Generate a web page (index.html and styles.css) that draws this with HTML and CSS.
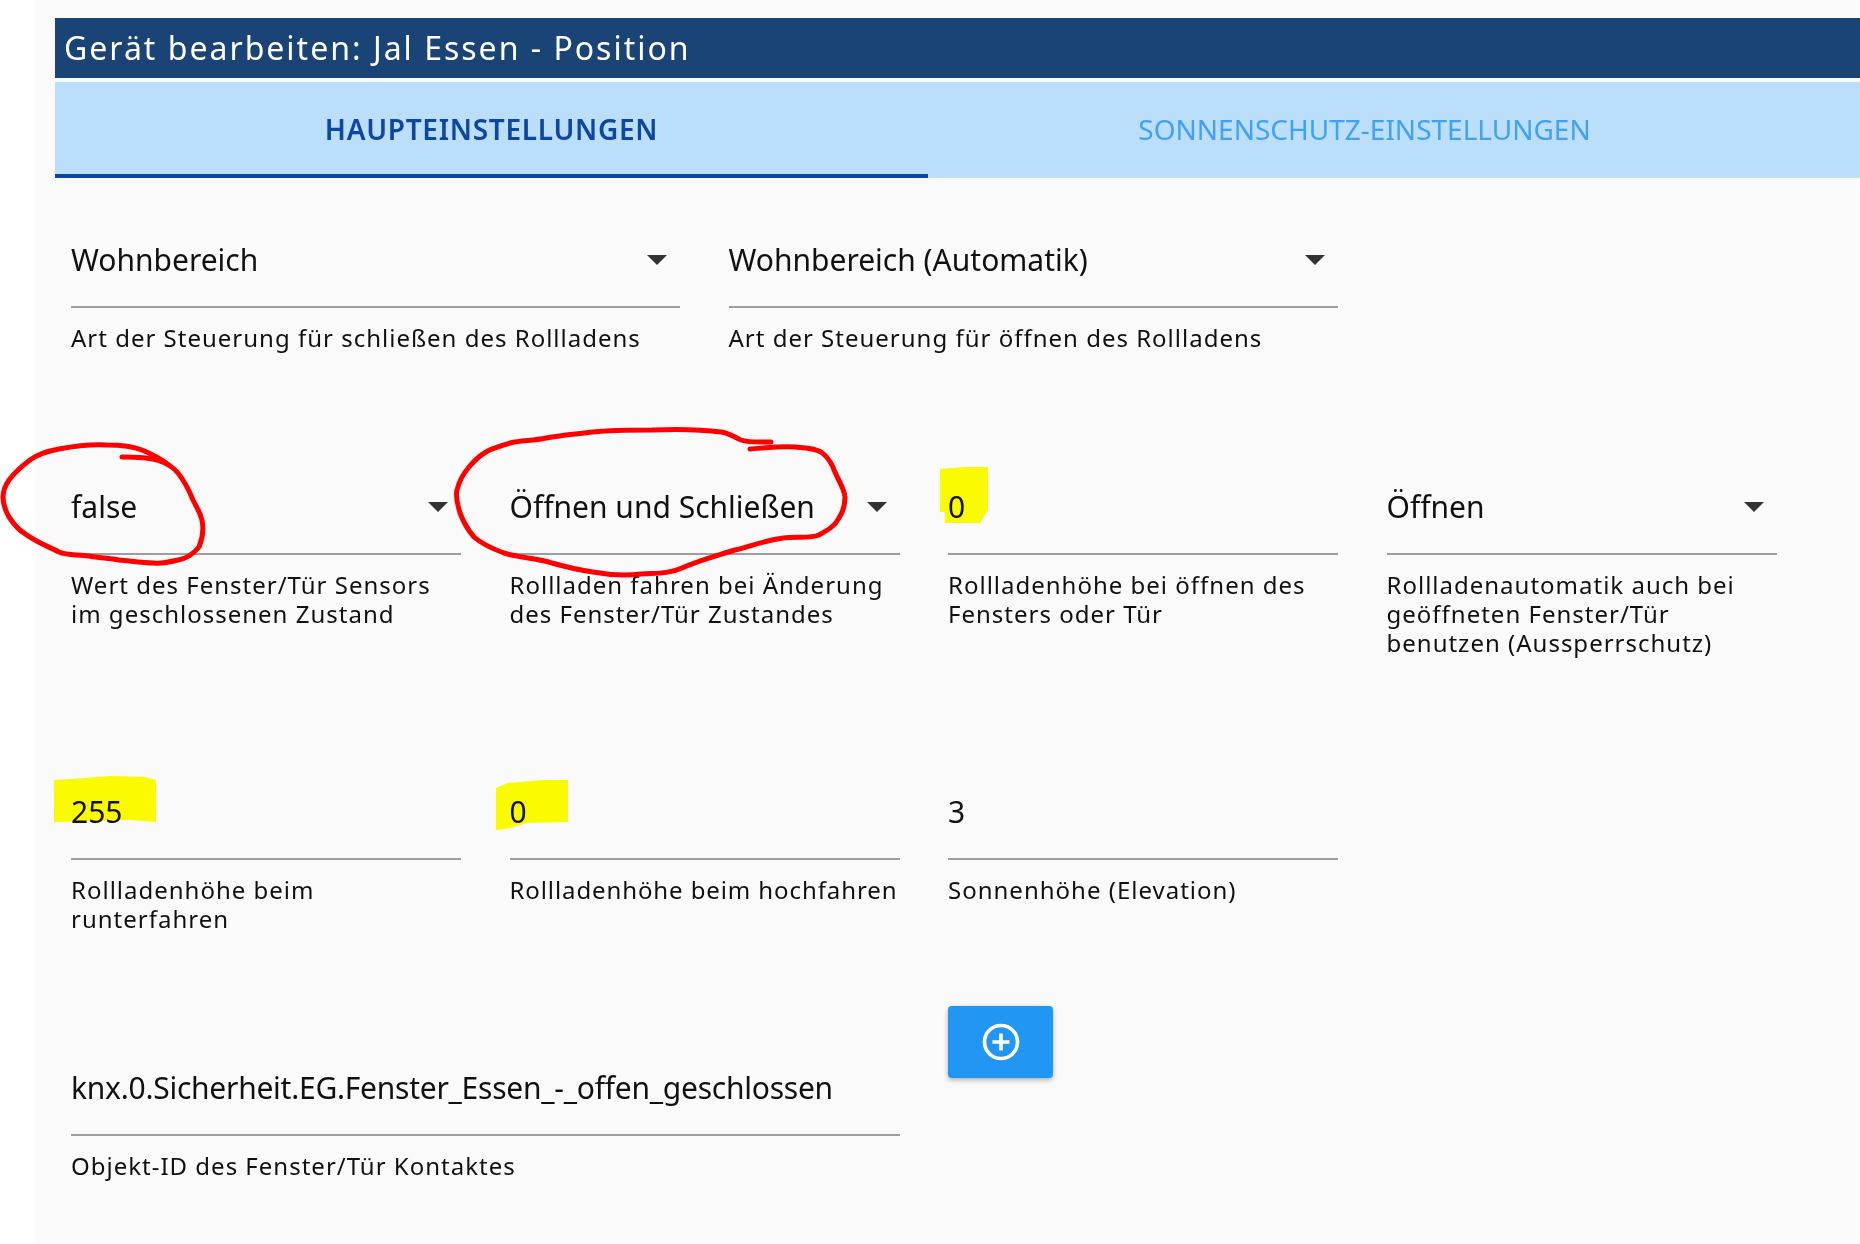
FILE: index.html
```html
<!DOCTYPE html>
<html lang="de">
<head>
<meta charset="utf-8">
<title>Gerät bearbeiten</title>
<link rel="stylesheet" href="styles.css">
</head>
<body>
<main class="panel">
  <h1 class="title">Gerät bearbeiten: Jal Essen - Position</h1>
  <nav class="tabs">
    <a class="tab tab-active">HAUPTEINSTELLUNGEN</a>
    <a class="tab">SONNENSCHUTZ-EINSTELLUNGEN</a>
  </nav>
  <section class="form">
    <div class="row row-wide">
      <div class="field"><div class="value select">Wohnbereich</div><p class="label">Art der Steuerung für schließen des Rollladens</p></div>
      <div class="field"><div class="value select">Wohnbereich (Automatik)</div><p class="label">Art der Steuerung für öffnen des Rollladens</p></div>
    </div>
    <div class="row row-four row-sensor">
      <div class="field"><div class="value select">false</div><p class="label">Wert des Fenster/Tür Sensors im geschlossenen Zustand</p></div>
      <div class="field"><div class="value select">Öffnen und Schließen</div><p class="label">Rollladen fahren bei Änderung des Fenster/Tür Zustandes</p></div>
      <div class="field"><div class="value">0</div><p class="label">Rollladenhöhe bei öffnen des Fensters oder Tür</p></div>
      <div class="field"><div class="value select">Öffnen</div><p class="label">Rollladenautomatik auch bei geöffneten Fenster/Tür benutzen (Aussperrschutz)</p></div>
    </div>
    <div class="row row-four row-height">
      <div class="field"><div class="value">255</div><p class="label">Rollladenhöhe beim runterfahren</p></div>
      <div class="field"><div class="value">0</div><p class="label label-single">Rollladenhöhe beim hochfahren</p></div>
      <div class="field"><div class="value">3</div><p class="label">Sonnenhöhe (Elevation)</p></div>
    </div>
    <div class="row row-four row-object">
      <div class="field field-span"><div class="value value-object">knx.0.Sicherheit.EG.Fenster_Essen_-_offen_geschlossen</div><p class="label">Objekt-ID des Fenster/Tür Kontaktes</p></div>
      <button class="add" type="button" aria-label="Hinzufügen">
        <svg class="add-icon" viewBox="0 0 38 38" aria-hidden="true"><circle cx="19" cy="19" r="16.5" fill="none" stroke="#fff" stroke-width="3.6"/><path d="M19 10.5v17M10.5 19h17" fill="none" stroke="#fff" stroke-width="3.6"/></svg>
      </button>
    </div>
  </section>
</main>
<svg class="marks" viewBox="0 0 1860 1244" aria-hidden="true">
  <g class="marks-yellow">
    <path d="M940 469L964 467L988 467L988 510L980 523L945 523L945 512L940 512Z"/>
    <path d="M54 780L72 779L110 776L145 777L156 780L156 822L131 820L54 822Z"/>
    <path d="M496 788L508 783L543 780L568 780L568 822L527 823L506 829L496 830Z"/>
  </g>
  <g class="marks-red">
    <path d="M122 457C135 457 147 457 157 460C166 463 174 468 178 473C185 482 189 490 193 500C197 508 200 512 202 520C204 530 202 540 199 547C194 553 186 559 178 560C170 562 162 564 154 563C142 563 131 561 119 560C109 558 99 558 89 556C78 554 68 556 59 552C47 546 34 541 24 533C17 529 13 523 9 517C5 510 3 504 3 497C3 490 5 486 9 480C15 472 22 466 30 460C38 454 48 451 59 449C75 446 91 444 107 445C120 445 132 446 142 450C152 454 161 459 169 465"/>
    <path d="M771 442C760 442 750 443 741 440C734 437 729 433 721 432C698 429 675 429 652 430C632 430 612 430 593 432C577 434 562 435 546 438C533 441 521 440 510 443C501 446 493 448 486 452C479 456 474 461 469 467C463 474 459 482 457 490C455 498 458 505 460 513C463 521 468 530 474 537C483 545 493 549 504 553C520 558 537 558 552 563C566 567 579 570 593 572C609 575 625 576 641 574C656 573 669 574 682 568C700 560 716 556 735 550C751 546 767 540 783 538C796 536 810 539 819 535C828 530 835 526 839 518C843 512 845 505 845 497C844 487 836 477 833 467C830 461 827 456 821 452C814 448 804 448 795 447C780 446 765 448 750 449"/>
  </g>
</svg>
</body>
</html>
```
FILE: styles.css
```css
* { box-sizing: border-box; }
html, body { margin: 0; height: 100%; }
body {
  background: #fff;
  font-family: "Noto Sans", "Open Sans", sans-serif;
  color: #111;
  overflow: hidden;
}
.panel {
  margin-left: 35px;
  height: 1244px;
  padding-top: 18px;
  background: #fafafa;
  overflow: hidden;
}
.title {
  margin: 0 0 0 20px;
  height: 60px;
  padding-left: 9px;
  background: #194475;
  color: #fff;
  font-size: 32px;
  font-weight: 400;
  line-height: 60px;
  letter-spacing: 2px;
}
.tabs {
  display: flex;
  margin: 4px 0 0 20px;
  height: 96px;
  background: #bbdefb;
}
.tab {
  flex: 0 0 873px;
  display: flex;
  align-items: center;
  justify-content: center;
  font-size: 28px;
  color: #42a2f2;
  padding-bottom: 3px;
}
.tab-active {
  color: #0d47a1;
  font-weight: 600;
  letter-spacing: .7px;
  border-bottom: 4px solid #0d47a1;
  padding-top: 2px;
  padding-bottom: 0;
}
.form { padding: 36px 0 0 36px; }
.row { display: grid; column-gap: 48.5px; }
.row-wide { grid-template-columns: 609px 609px; height: 247px; }
.row-four { grid-template-columns: repeat(4, 390px); }
.row-sensor { height: 305px; }
.row-height { height: 240px; }
.value {
  position: relative;
  height: 94px;
  padding-top: 26px;
  border-bottom: 2px solid #9e9e9e;
  font-size: 30px;
  line-height: 40px;
  white-space: nowrap;
}
.value-object { letter-spacing: -.25px; }
.select::after {
  content: "";
  position: absolute;
  right: 13px;
  top: 41px;
  border-style: solid;
  border-width: 10px 10px 0;
  border-color: #333 transparent transparent;
}
.label {
  margin: 15px 0 0;
  font-size: 24px;
  line-height: 29px;
  letter-spacing: 1px;
}
.label-single { white-space: nowrap; letter-spacing: .9px; }
.field-span { grid-column: span 2; padding-top: 36px; }
.add {
  width: 105px;
  height: 72px;
  padding: 0;
  border: 0;
  border-radius: 4px;
  background: #2196f3;
  box-shadow: 0 2px 5px rgba(0,0,0,.3);
  display: flex;
  align-items: center;
  justify-content: center;
}
.add-icon { width: 38px; height: 38px; }
.marks {
  position: absolute;
  left: 0;
  top: 0;
  width: 1860px;
  height: 1244px;
  pointer-events: none;
}
.marks-yellow { fill: #ffff00; mix-blend-mode: multiply; }
.marks-red { fill: none; stroke: #f00; stroke-width: 5; stroke-linecap: round; stroke-linejoin: round; }
```
